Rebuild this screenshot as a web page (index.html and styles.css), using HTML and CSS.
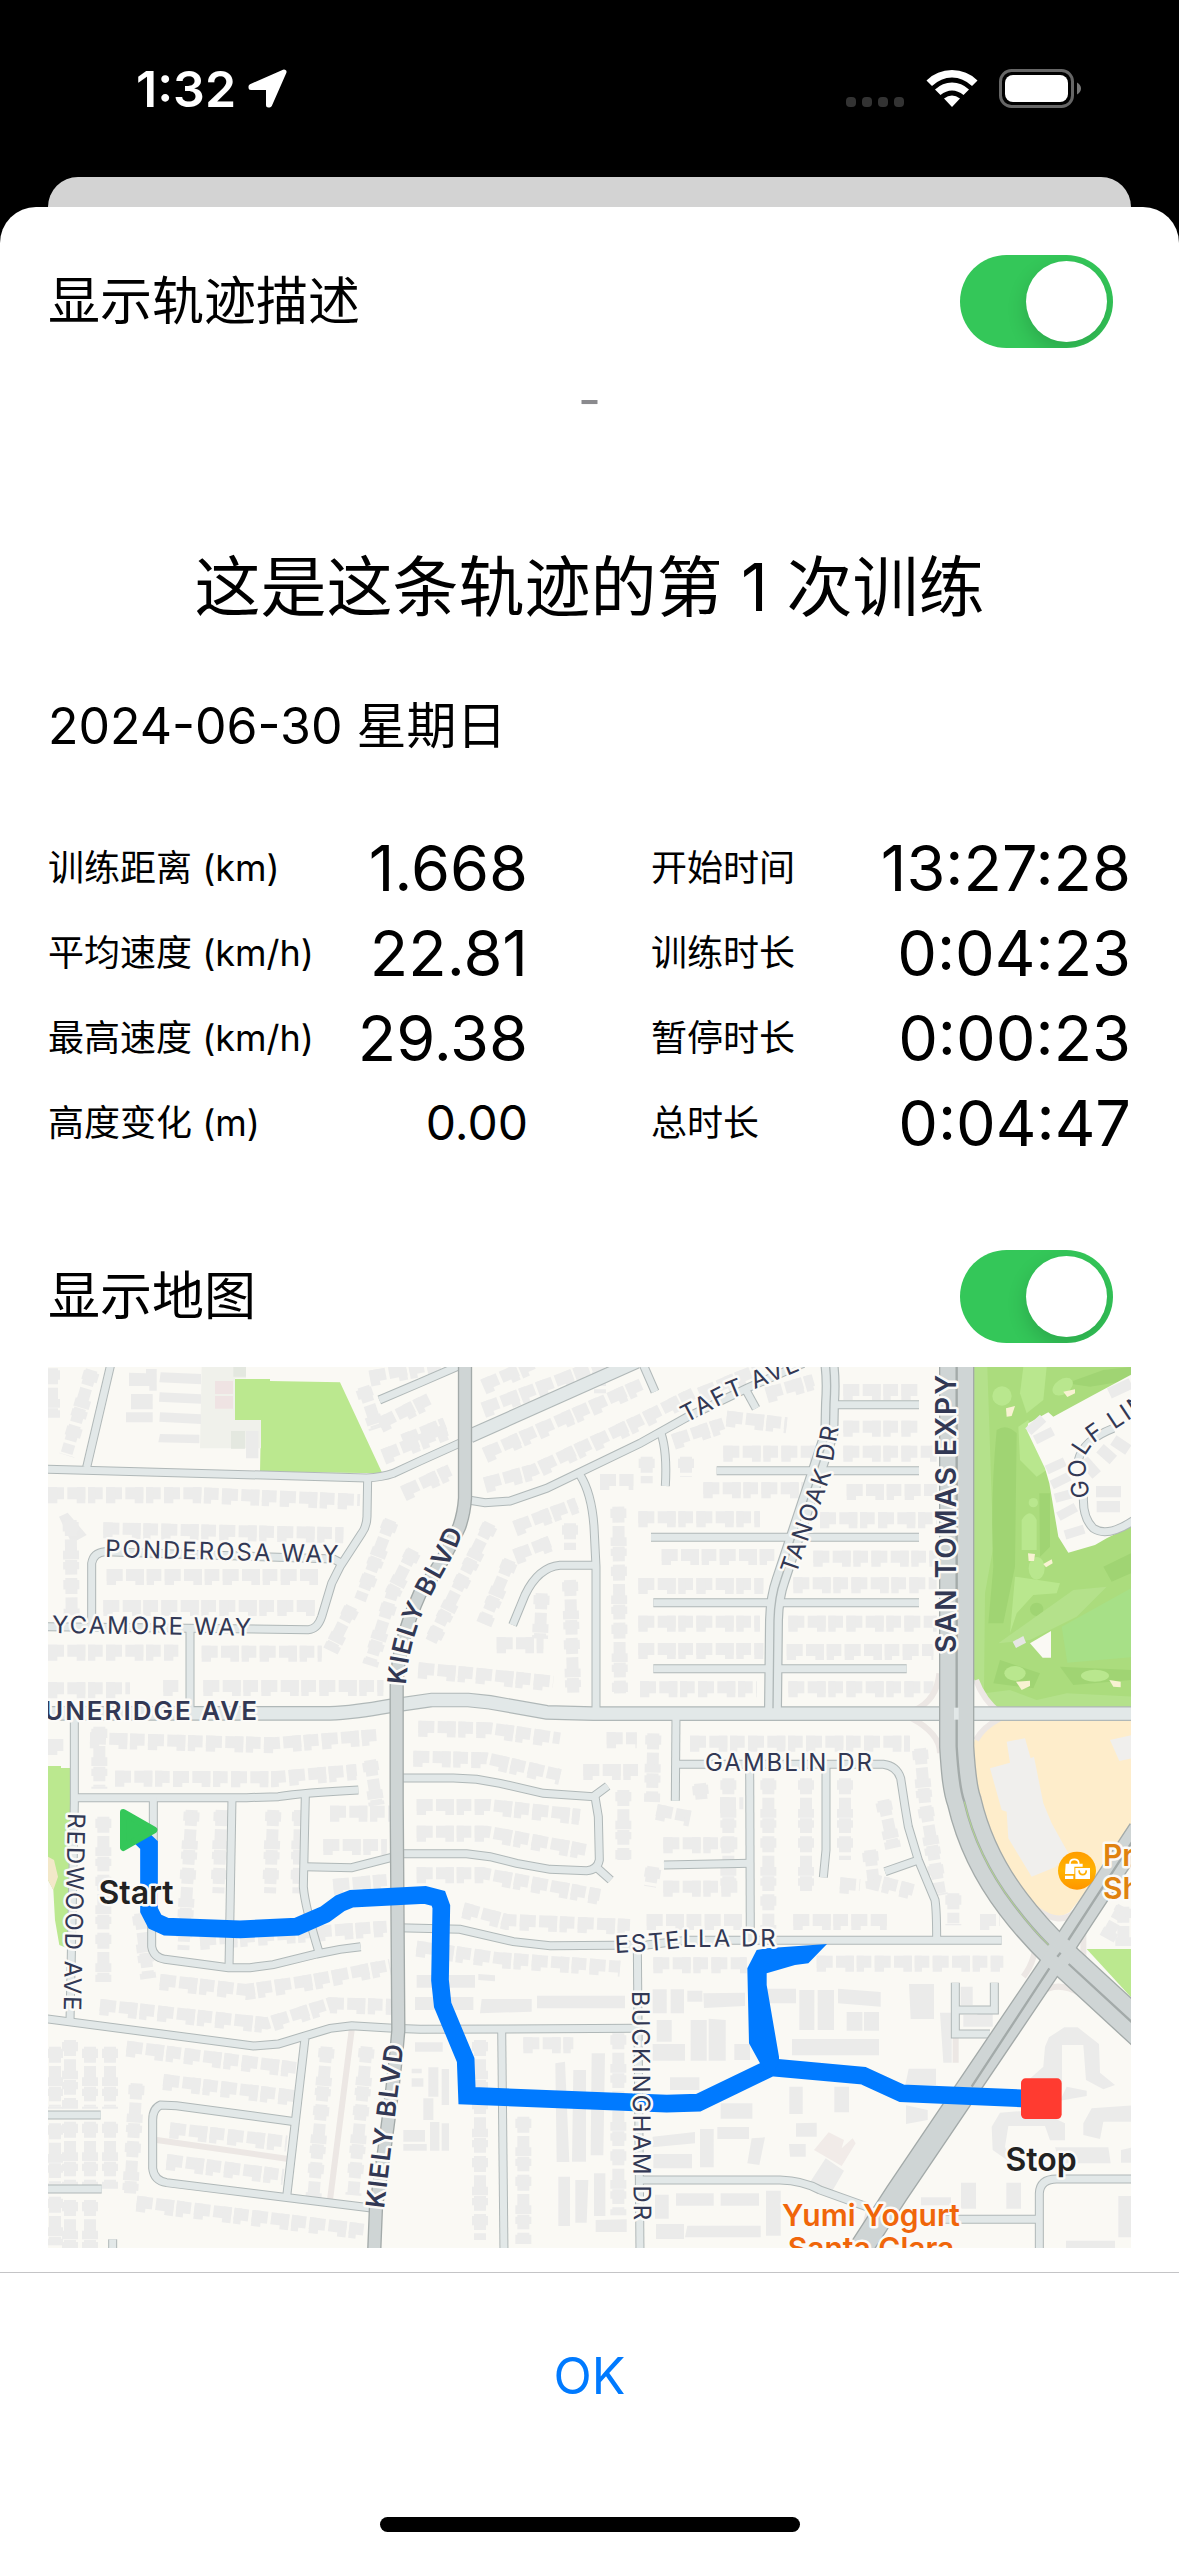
FILE: index.html
```html
<!DOCTYPE html>
<html lang="zh-CN">
<head>
<meta charset="utf-8">
<meta name="viewport" content="width=device-width, initial-scale=1">
<title>训练轨迹</title>
<link rel="stylesheet" href="styles.css">
</head>
<body>
<header class="status">
  <span class="clock">1:32</span>
  <svg class="arrow" viewBox="0 0 40 40" width="40" height="40" aria-hidden="true"><path d="M36 3 L3 17.5 V18.500 H20.500 V36 H21.500 Z" fill="#fff" stroke="#fff" stroke-width="5" stroke-linejoin="round"/></svg>
  <svg class="signal" viewBox="0 0 58 40" width="58" height="40" aria-hidden="true"><g fill="#333"><rect y="28" width="10" height="10" rx="4"/><rect x="16" y="28" width="10" height="10" rx="4"/><rect x="32" y="28" width="10" height="10" rx="4"/><rect x="48" y="28" width="10" height="10" rx="4"/></g></svg>
  <svg class="wifi" viewBox="0 0 52 40" width="52" height="40" aria-hidden="true"><g fill="#fff"><path d="M26 1 Q41 1 51.500 11.500 L46 17 Q37 8.500 26 8.500 T6 17 L.5 11.500 Q11 1 26 1Z"/><path d="M26 13.500 Q35.500 13.500 43 20.500 L37.500 26 Q32 21.500 26 21.500 T14.500 26 L9 20.500 Q16.500 13.500 26 13.500Z"/><path d="M26 26.500 Q30 26.500 34 29.500 L26 38 L18 29.500 Q22 26.500 26 26.500Z"/></g></svg>
  <svg class="battery" viewBox="0 0 83 40" width="83" height="40" aria-hidden="true"><rect x="1.500" y="1.500" width="72" height="36" rx="11" fill="none" stroke="#666" stroke-width="3"/><rect x="6" y="6" width="63" height="27" rx="8" fill="#fff"/><path d="M78 13.500 Q82 16 82 19.500 T78 25.500Z" fill="#777"/></svg>
</header>
<div class="behind"></div>
<main class="sheet">
  <div class="content">
    <div class="option">
      <label for="show-desc">显示轨迹描述</label>
      <input class="switch" type="checkbox" role="switch" id="show-desc" checked>
    </div>
    <p class="desc">-</p>
    <h1 class="title">这是这条轨迹的第 1 次训练</h1>
    <p class="date">2024-06-30 星期日</p>
    <div class="stats">
      <dl class="col">
        <div class="stat"><dt>训练距离 (km)</dt><dd>1.668</dd></div>
        <div class="stat"><dt>平均速度 (km/h)</dt><dd>22.81</dd></div>
        <div class="stat"><dt>最高速度 (km/h)</dt><dd>29.38</dd></div>
        <div class="stat"><dt>高度变化 (m)</dt><dd class="small">0.00</dd></div>
      </dl>
      <dl class="col">
        <div class="stat"><dt>开始时间</dt><dd>13:27:28</dd></div>
        <div class="stat"><dt>训练时长</dt><dd>0:04:23</dd></div>
        <div class="stat"><dt>暂停时长</dt><dd>0:00:23</dd></div>
        <div class="stat"><dt>总时长</dt><dd>0:04:47</dd></div>
      </dl>
    </div>
    <div class="option map-option">
      <label for="show-map">显示地图</label>
      <input class="switch" type="checkbox" role="switch" id="show-map" checked>
    </div>
    <svg class="map" viewBox="0 0 1083 881" role="img" aria-label="训练轨迹地图">
      <defs>
        <linearGradient id="poi" x1="0" y1="0" x2="0" y2="1"><stop offset="0" stop-color="#ff9d00"/><stop offset=".5" stop-color="#ffb300"/><stop offset="1" stop-color="#ff9500"/></linearGradient>
        <g id="lots">
          <path d="M24 400 L480 400 L960 420"/><path d="M190 505 L910 520"/><path d="M200 645 H840"/><path d="M190 738 H825"/><path d="M24 872 H415"/><path d="M485 875 H845"/><path d="M24 985 H270"/><path d="M370 978 H415"/><path d="M490 978 H1030"/><path d="M150 1135 L700 1150 L1010 1125"/><path d="M225 1250 L700 1252 L950 1230"/><path d="M92 480 L95 760"/><path d="M178 1100 V1280"/>
          <path d="M1052 480 L960 720"/><path d="M1120 570 L1060 690 L990 910"/><path d="M935 740 L870 870"/><path d="M155 30 L80 280"/><path d="M36 25 V170"/><path d="M990 50 L1200 10"/><path d="M970 80 L1010 200"/><path d="M1020 190 L1170 115"/><path d="M1030 285 L1220 210"/><path d="M1090 395 L1230 330"/><path d="M1090 240 L1215 190"/><path d="M24 1155 H70"/><path d="M990 1200 L1010 1330"/>
          <path d="M1330 75 L1480 10"/><path d="M1330 145 L1690 10"/><path d="M1335 280 L1810 70"/><path d="M1335 370 L1480 330 L1790 185 L1960 100"/><path d="M1425 500 L1610 430"/><path d="M1425 585 L1530 545"/><path d="M1590 490 V570"/><path d="M1350 490 L1170 850"/><path d="M1410 600 L1330 790"/><path d="M1505 700 L1500 830"/><path d="M1590 660 L1600 1000"/><path d="M1370 850 L1510 850"/><path d="M1135 925 L1300 940 L1540 965"/><path d="M1135 1100 L1350 1105 L1560 1135"/><path d="M1700 1135 H1790"/><path d="M1120 1190 L1340 1195 L1560 1245"/><path d="M1630 1230 H1800"/><path d="M1680 360 H1780"/><path d="M1735 440 L1740 1000"/><path d="M1820 290 V370"/><path d="M1938 290 V350"/><path d="M1840 1120 L1836 1320"/><path d="M1680 30 V100"/><path d="M1750 1290 V1500"/>
          <path d="M1900 240 L2050 190"/><path d="M1980 100 L2150 30"/><path d="M2060 170 L2240 190"/><path d="M2180 100 L2320 60"/><path d="M2050 275 H2330"/><path d="M1990 385 H2290"/><path d="M2410 90 H2640"/><path d="M2410 200 H2640"/><path d="M2410 275 H2690"/><path d="M2420 390 H2690"/><path d="M1795 472 H2160"/><path d="M2340 475 H2690"/><path d="M1865 585 H2210"/><path d="M2320 590 H2690"/><path d="M1795 672 H2170"/><path d="M2260 670 H2690"/><path d="M1795 785 H2160"/><path d="M2245 785 H2690"/><path d="M1795 867 H2170"/><path d="M2240 870 H2680"/><path d="M1800 982 H2150"/><path d="M2245 982 H2680"/><path d="M1950 1145 H2610"/><path d="M1980 1270 L1985 1320"/><path d="M2065 1255 V1580"/><path d="M2185 1255 V1700"/><path d="M2298 1255 V1600"/><path d="M2415 1255 V1500"/><path d="M2640 1165 L2655 1330 L2700 1600"/><path d="M2530 1320 L2560 1460"/>
          <path d="M190 1370 V1860"/><path d="M455 1350 L430 1770"/><path d="M545 1350 L535 1600"/><path d="M700 1350 L690 1600"/><path d="M780 1350 L775 1600"/><path d="M870 1355 H1050"/><path d="M850 1455 H1040"/><path d="M880 1575 L1040 1560"/><path d="M300 1660 L325 1850"/><path d="M480 1740 L1040 1700"/><path d="M360 1860 L620 1890 L820 1860 L1050 1815"/><path d="M180 1935 L680 1990 L870 1930 L1070 1935"/><path d="M260 2060 L780 2125"/><path d="M370 2160 L780 2210"/><path d="M390 2305 L740 2345"/><path d="M380 2400 L730 2445"/><path d="M290 2525 L980 2610"/><path d="M290 2170 L270 2500"/><path d="M860 2060 L820 2510"/><path d="M980 2060 L940 2500"/><path d="M90 2040 V2240"/><path d="M150 2060 V2240"/><path d="M210 2060 V2240"/><path d="M90 2285 V2480"/><path d="M150 2285 V2480"/><path d="M210 2285 V2480"/><path d="M45 2060 V2240"/><path d="M45 2290 V2470"/><path d="M90 2520 V2660"/><path d="M150 2520 V2660"/><path d="M45 2510 V2650"/>
          <path d="M1130 1335 H1350 L1620 1365"/><path d="M1130 1415 H1340 L1640 1470"/><path d="M1130 1540 H1330 L1680 1605"/><path d="M1270 1645 L1400 1680 L1770 1695"/><path d="M1130 1760 L1380 1795 L1740 1820"/><path d="M1840 1810 H2120"/><path d="M2330 1805 H2890"/><path d="M2260 1680 H2540"/><path d="M2740 1600 V1690"/><path d="M2820 1680 H2880"/><path d="M1850 1350 L1950 1370"/><path d="M1870 1450 H2100"/><path d="M1840 1520 L1830 1580"/><path d="M1870 1580 H2100"/><path d="M1820 1680 H2110"/><path d="M2490 1470 L2500 1560 L2620 1590"/><path d="M2400 1570 L2460 1575"/><path d="M1320 2040 V2640"/><path d="M1450 2270 V2650"/><path d="M1450 2050 H1600"/><path d="M1735 2020 V2560"/><path d="M2040 1330 H2110"/><path d="M3250 1640 V1760"/><path d="M3200 1730 L3250 1640"/>
        </g>
        <g id="medium">
          <path d="M10 1060 H870 Q940 1058 1050 1038 L1175 1020 H1285 L1350 1027 L1520 1057 L1660 1061 H3290"/>
          <path d="M1290 228 L1790 5"/>
        </g>
        <g id="local">
          <path d="M213 10 L140 322"/><path d="M10 327 L980 354 Q1025 352 1060 340 L1140 303 L1260 249"/><path d="M1018 120 L1140 68 L1260 16"/>
          <path d="M983 354 L981 470 Q980 500 965 520 L900 620 L875 670 L845 770 Q832 808 805 809 L10 800"/><path d="M155 798 V610 Q160 578 195 575 L880 597 L905 610"/><path d="M450 810 V1050"/>
          <path d="M103 1075 V1330 L90 1985"/><path d="M103 1313 H620 L715 1310 Q790 1298 955 1290"/><path d="M340 1313 V1500 L335 1700 V1760 Q340 1792 375 1798 L565 1823 H630 L700 1814 L830 1782 L900 1768 L962 1760"/><path d="M576 1313 L567 1823"/><path d="M796 1305 L790 1580 Q795 1640 838 1780"/>
          <path d="M795 1520 L935 1523 L1055 1492 L1090 1481 H1280 L1350 1490 L1430 1510 L1530 1528 L1640 1532 Q1672 1530 1678 1500 L1675 1370 L1665 1310"/><path d="M1080 1254 H1240 L1310 1258 L1380 1270 L1510 1300 L1660 1310 L1703 1278"/><path d="M1673 1525 L1712 1560"/>
          <path d="M1075 1703 L1260 1708 L1420 1745 L1530 1757 L1820 1755 L1940 1741 H2885"/><path d="M10 1975 L640 2058 L715 2052 L870 2005 L935 1997 L1060 2005 L1140 2008 L1785 2005"/>
          <path d="M795 2035 L740 2510"/><path d="M765 2285 L410 2237 L362 2235 Q338 2245 338 2280 V2425 Q342 2462 380 2468 L1000 2545"/><path d="M10 2265 H182"/><path d="M10 2487 H185"/><path d="M218 2638 V2680"/>
          <path d="M1385 2005 L1392 2680"/><path d="M1792 1760 L1800 2680"/><path d="M1800 2460 H2220 Q2290 2462 2340 2490 L2480 2540"/><path d="M2700 2578 H2990"/><path d="M2998 2680 V2500 Q3000 2457 3050 2457 H3290"/>
          <path d="M2746 1868 V2022 H2850"/><path d="M2746 1950 H2863 V1868"/><path d="M1915 1213 H2530 Q2570 1218 2582 1255 L2595 1340 L2605 1400 L2635 1500 L2685 1620 Q2690 1650 2690 1741"/><path d="M2635 1500 L2535 1535"/>
          <path d="M2358 1215 V1470 L2350 1552"/><path d="M1908 1065 L1906 1322"/><path d="M2129 1215 L2131 1741"/><path d="M1872 1515 L2131 1510"/><path d="M1668 1060 V620 L1662 500 Q1655 400 1620 345"/><path d="M1418 795 L1455 705 Q1495 622 1560 616 H1668"/>
          <path d="M1285 420 L1335 428 L1410 423 L1520 385 L1800 250 L1940 172 L2120 85 L2290 10"/><path d="M1863 220 Q1882 275 1876 378"/><path d="M1808 10 L1845 95"/><path d="M2115 85 L2148 145"/>
          <path d="M2030 332 H2637"/><path d="M1833 532 H2637"/><path d="M1840 728 H2637"/><path d="M1840 926 H2600"/><path d="M2380 134 H2637"/>
          <path d="M3131 400 Q3125 470 3160 505 Q3205 535 3290 475 M3115 300 Q3130 240 3220 205"/>
        </g>
        <g id="tanoak"><path d="M2367 5 Q2375 60 2370 130 L2368 220 L2222 660 Q2204 710 2202 780 L2199 1045"/></g>
        <path id="kiely" d="M1275 5 V415 Q1272 460 1258 500 Q1210 610 1140 700 Q1072 850 1070 980 V1320 L1075 2010 Q1060 2200 1008 2540 L1002 2690"/>
        <path id="tomas" d="M2750 5 V1160 C2755 1240 2760 1290 2773 1325 C2800 1440 2850 1540 2920 1632 C2960 1685 3000 1730 3055 1783 L3310 2018"/>
        <path id="expy" d="M3300 1410 L3055 1783 L2570 2500 L2460 2670"/>
        <path id="t-ponderosa" d="M57 190 L300 196"/>
        <path id="t-sycamore" d="M4 266 L230 269"/>
        <path id="t-kiely1" d="M358 318 Q360 282 374 248 Q386 222 400 198 Q415 170 425 135"/>
        <path id="t-kiely2" d="M336 842 L360 640"/>
        <path id="t-redwood" d="M20 446 L15 670"/>
        <path id="t-taft" d="M638 56 L690 29 L780 -8"/>
        <path id="t-tanoak" d="M748 208 L782 110 L796 30"/>
        <path id="t-tomas" d="M908 286 V-40"/>
        <path id="t-golf" d="M1042 130 Q1036 100 1038 88 Q1045 74 1060 67 L1110 34"/>
        <path id="t-estella" d="M567 586 Q610 584 640 580 L760 579"/>
        <path id="t-buckingham" d="M584 624 L586 880"/>
      </defs>
      <rect width="1083" height="881" fill="#faf9f4"/>
      <g transform="scale(.333333) translate(-24 -21)">
        <g fill="#bbe88f">
          <path d="M585 57 H690 V63 L900 67 L1027 340 L660 335 L663 185 L579 183 V125 L585 123Z"/>
          <path d="M24 1218 H63 V1224 H92 V1560 L82 1765 L58 1755 L45 1680 L40 1590 L24 1560Z"/>
          <path d="M3140 1767 H3290 V1930Z"/>
        </g>
        <path d="M485 21 H618 V55 H585 V180 H663 V265 H480Z" fill="#f0f1eb"/>
        <path d="M525 63 H579 V102 H525Z M525 108 H579 V146 H525Z" fill="#efe3e3"/>
        <path d="M573 213 H615 V266 H573Z M580 21 H618 V50 H580Z" fill="#e4e8e0"/>
        <path d="M24 1490 L42 1500 L54 1550 L40 1590 L24 1560Z" fill="#f3e8c9"/>
        <path d="M2865 1080 H3290 V1400 L3090 1655 Q3050 1685 2995 1645 Q2830 1480 2805 1300 L2801 1150 Q2810 1110 2865 1080Z" fill="#feedcb"/>
        <path d="M2900 1145 L2955 1135 L2972 1195 L2982 1190 L3010 1330 L3035 1390 L3085 1480 L3045 1522 L2975 1550 L2905 1435 L2900 1355 L2885 1350 L2850 1225 L2910 1208Z M3210 1140 L3290 1122 V1192 L3238 1203Z" fill="#f0efed"/>
        <path d="M2795 21 H3290 V1050 H2862 Q2805 990 2795 930Z" fill="#b4e18b"/>
        <path d="M2842 21 H3290 V1010 L3080 1000 L2990 1020 L2910 990 L2832 1000 L2835 700 L2860 560 Z" fill="#abdc7d"/>
        <g fill="#a0d473">
          <path d="M2870 210 Q2900 190 2930 220 L2925 620 L2890 790 H2845 L2860 620 Q2850 420 2870 210Z"/><path d="M3080 70 L3190 30 L3273 21 V60 L3150 80Z"/><path d="M3190 620 L3273 580 V640 L3215 665Z"/><path d="M2998 400 H3030 V560 L3000 590Z"/><circle cx="2990" cy="748" r="20"/><path d="M2880 900 L3000 940 L2980 985 L2860 970Z"/><path d="M3060 920 L3273 930 V960 L3100 975Z"/>
        </g>
        <g fill="#b9e78e">
          <path d="M2950 21 L3020 21 L3010 120 L2960 160 L2940 100Z"/><circle cx="2886" cy="108" r="29"/><ellipse cx="3068" cy="80" rx="34" ry="22" transform="rotate(-35 3068 80)"/><path d="M2935 200 L2965 180 L3020 330 L2990 350 L2940 300Z"/><path d="M2945 480 Q2970 440 2990 480 V570 H2945Z"/><path d="M2925 650 L3060 670 L3050 700 L2980 705 L2930 760 L2910 820Z"/><ellipse cx="2990" cy="625" rx="24" ry="34"/><ellipse cx="2925" cy="940" rx="32" ry="22"/><ellipse cx="3165" cy="947" rx="42" ry="18"/><circle cx="2980" cy="428" r="14"/>
        </g>
        <path d="M3290 675 L3065 800 L3082 908 L3290 890Z" fill="#a7e087"/>
        <path d="M2875 850 L3100 690 L3200 680 L3110 770 L2970 840Z" fill="#b4e18b"/>
        <path d="M3290 35 L3160 105 L3095 140 L3040 170 L3025 157 L2965 190 L2960 210 L3015 325 L3028 370 L3055 530 L3085 578 L3165 555 L3200 535 L3290 490Z" fill="#faf9f4"/>
        <path d="M2970 850 L3033 813 V893 H3008Z" fill="#faf9f4"/>
        <path d="M2918 845 L2950 828 L2958 848 L2928 864Z" fill="#e6e6e4"/>
        <g fill="#f8f2d2"><path d="M3070 95 L3105 88 V100 L3082 111Z"/><path d="M2898 145 L2925 138 L2915 168 L2900 170Z"/><path d="M2964 580 L2985 582 L2982 603 H2966Z"/><path d="M3010 612 L3035 598 L3038 610 L3018 622Z"/><path d="M2928 965 L2970 962 V978 L2945 990Z"/><path d="M3208 960 L3242 965 V982 L3220 980Z"/></g>
        <g fill="none" stroke="#ebebea" stroke-width="46">
          <path d="M2965 215 L3020 165 M2985 240 L3045 210 M3020 330 L3085 300 M3035 375 L3095 345 M3045 415 L3100 400 M3055 470 L3110 440 M3075 525 L3140 505" stroke-dasharray="60 14" stroke-width="28"/>
          <path d="M3170 440 H3240 M3168 395 H3243 M3208 100 L3273 70 M3130 300 L3170 345 M3180 265 L3220 300 M3220 240 L3265 270" stroke-width="34"/>
        </g>
        <g fill="#ebebea">
          <path d="M267 38 L318 40 V27 H350 V92 H328 V78 H267Z M362 37 L483 42 V73 L358 67Z M359 97 L483 103 V131 L357 125Z M360 157 L483 163 V192 L358 185Z M360 222 L478 224 V250 L355 247Z M273 102 H338 V148 H273Z M258 157 H338 V187 H258Z M618 213 H655 V295 H618Z M57 470 L83 458 L140 525 L95 550Z"/>
          <path d="M1130 1845 H1305 V1883 H1130Z M1125 1911 H1300 V1950 H1125Z M1325 1917 L1475 1917 V1955 L1320 1960Z M1491 1907 H1755 V1945 H1491Z M1315 1842 L1365 1846 V1864 L1315 1860Z M1125 2047 H1208 V2075 H1125Z"/>
          <path d="M1165 2122 H1195 V2210 H1165Z M1205 2127 H1227 V2235 H1205Z M1115 2126 H1145 V2140 H1115Z M1115 2155 H1150 V2180 H1115Z M1150 2215 H1180 V2280 H1150Z M1090 2310 H1155 V2345 H1090Z M1090 2352 H1160 V2372 H1090Z M1170 2286 H1198 V2372 H1170Z M1205 2290 H1227 V2372 H1205Z"/>
          <path d="M1838 1888 H1880 V1960 H1838Z M1892 1888 H1932 V1960 H1892Z M1942 1892 H1987 V1925 H1942Z M1990 1900 L2115 1898 V1938 L1992 1944Z M1838 2052 H1935 V2102 H1838Z M1952 1980 H2000 V2102 H1952Z M2006 1976 L2057 1980 V2102 H2006Z M2083 2052 H2130 V2100 H2083Z M1850 1980 H1895 V2045 H1850Z M1890 2152 H1978 V2190 H1890Z M2042 2230 H2137 V2276 H2042Z"/>
          <path d="M1546 2110 L1575 2105 L1588 2406 H1550Z M1600 2130 H1638 V2405 H1596Z M1655 2080 H1695 L1690 2386 H1652Z M1555 2450 H1590 V2598 H1555Z M1606 2460 H1645 L1640 2588 H1606Z M1662 2440 H1696 V2568 H1662Z M1667 2580 L1760 2578 V2616 H1667Z"/>
          <path d="M1838 2330 L1965 2316 V2350 L1838 2362Z M1980 2307 H2021 V2422 H1980Z M2032 2301 H2127 V2337 H2032Z M1840 2382 H1956 V2425 H1840Z M2135 2335 L2175 2332 L2158 2415 L2122 2410Z M1908 2500 H2021 V2537 H1908Z M2042 2500 H2157 V2537 H2042Z M1848 2592 H1932 V2637 H1848Z M1942 2597 H2162 V2632 H1935Z M1845 2504 H1886 V2576 H1845Z M2178 2492 H2222 V2627 H2178Z"/>
          <path d="M2180 1886 H2268 V1930 H2180Z M2278 1890 H2323 V2010 H2278Z M2333 1890 H2382 V2010 H2333Z M2394 1886 L2522 1896 V1940 L2394 1930Z M2420 1956 H2467 V2012 H2420Z M2472 1956 H2517 V2012 H2472Z M2256 2037 H2517 V2086 H2256Z M2607 1872 H2682 V1977 H2612Z M2606 2126 H2688 V2175 H2596Z M2598 2236 L2663 2250 V2280 L2598 2292Z M2248 2180 H2288 V2262 H2248Z M2383 2180 H2427 V2257 H2383Z M2268 2290 L2330 2288 V2330 H2268Z M2247 2352 H2297 V2390 H2250Z M2700 1958 H2735 V2108 H2710Z M2812 1945 H2858 V1995 H2812Z M2762 1880 H2798 V1935 H2762Z M2770 1965 H2858 V2000 H2770Z M2357 2395 L2412 2432 L2370 2505 L2308 2470Z M2763 2468 H2808 V2546 H2763Z M2899 2468 H2943 V2546 H2899Z M2643 2512 H2733 V2536 H2643Z M3078 2642 H3225 V2664 H3078Z M3235 2508 H3290 V2632 H3235Z"/>
          <path d="M3027 2032 L3073 2002 H3113 L3177 2052 L3180 2138 L3225 2175 L3190 2188 L3138 2160 L3130 2055 L3066 2055 V2190 L2965 2160 L3010 2120 L3015 2060Z M2880 2258 L2990 2250 L3075 2290 V2341 H3030 L3015 2298 H2905 L2895 2360 L2915 2410 L2858 2370 L2855 2300Z M3155 2245 L3290 2235 V2285 H3190 L3180 2337 L3130 2325 V2290Z M3080 2180 L3140 2192 V2208 L3060 2222Z M3045 2362 L3205 2362 L3212 2410 H3060Z M3243 2370 L3290 2360 V2408 H3243Z"/>
        </g>
        <path d="M2366 2317 L2412 2340 L2405 2365 L2438 2335 L2447 2350 L2405 2418 L2322 2370Z" fill="#f1ebe8"/>
        <use href="#lots" class="lots-a"/>
        <use href="#lots" class="lots-b" y="6"/>
        <g class="alley"><path d="M350 2340 L745 2397 M935 2010 L870 2520 M2747 2020 V2108 M2698 940 Q2690 1020 2625 1050 M2615 1075 Q2700 1120 2700 1180 M2808 960 Q2830 1020 2880 1060 M2808 1140 Q2830 1100 2880 1075 M2960 1620 Q3060 1720 3120 1640 M2990 1720 Q2990 1800 2950 1850 M3130 1680 V1840 M3000 1900 Q3050 1860 3120 1900 M2490 2540 L2460 2660"/></g>
        <use href="#local" class="local-casing"/><use href="#medium" class="medium-casing"/><use href="#tanoak" class="tanoak-casing"/>
        <use href="#local" class="local"/><use href="#medium" class="medium"/><use href="#tanoak" class="tanoak"/><use href="#tanoak" class="tanoak-line"/>
        <use href="#kiely" class="kiely-casing"/><use href="#tomas" class="tomas-casing"/><use href="#expy" class="expy-casing"/>
        <use href="#kiely" class="kiely"/><use href="#tomas" class="tomas"/><use href="#expy" class="expy"/>
        <g fill="none" stroke="#a3aaa9" stroke-width="7">
          <path d="M2750 21 V1160 C2755 1240 2760 1290 2773 1325 C2800 1440 2850 1540 2920 1632 C2960 1685 2990 1720 3026 1755 M3086 1812 L3290 2000 M3290 1425 L3085 1740 M3028 1825 L2795 2180 M3062 1778 L3052 1790"/>
        </g>
        <path d="M2773 1325 C2800 1440 2850 1540 2920 1632 C2960 1685 2990 1720 3026 1755" fill="none" stroke="#b4d990" stroke-width="3"/>
        <path d="M2742 1061 H2756" fill="none" stroke="#e2e8e8" stroke-width="36"/>
        <path class="route" d="M285 1415 L327 1455 V1650 L345 1685 L378 1700 L600 1708 L770 1700 L855 1663 L900 1630 L935 1616 L1155 1605 L1195 1615 L1204 1640 L1200 1860 L1208 1935 L1277 2100 L1281 2207 L1880 2231 L1975 2228 L2195 2122 L2470 2147 L2585 2200 L2945 2215"/>
        <path d="M2361 1752 L2305 1810 L2265 1815 L2180 1840 V1875 L2217 2090 V2105 L2195 2150 L2160 2110 L2127 2050 L2122 1825 L2150 1770 L2180 1765Z" fill="#007aff"/>
        <path d="M250 1357 L342 1410 L250 1463Z" fill="#34c759" stroke="#34c759" stroke-width="20" stroke-linejoin="round"/>
        <rect x="2943" y="2155" width="122" height="122" rx="14" fill="#ff3b30"/>
        <circle cx="3111" cy="1532" r="57" fill="url(#poi)"/>
        <g fill="#fff"><path d="M3077 1511 H3128 V1520 H3103 V1542 H3075Z M3075 1547 H3100 V1557 H3075Z M3106 1524 H3150 V1557 H3106Z"/><path d="M3090 1512 V1508 Q3091 1498 3103 1498 T3116 1508 V1512" fill="none" stroke="#fff" stroke-width="5"/><path d="M3117 1531 Q3118 1544 3128 1544 T3139 1531" fill="none" stroke="#ffae00" stroke-width="5"/></g>
      </g>
      <g class="street">
        <text><textPath href="#t-ponderosa">PONDEROSA WAY</textPath></text>
        <text><textPath href="#t-sycamore">YCAMORE WAY</textPath></text>
        <text><textPath href="#t-redwood">REDWOOD AVE</textPath></text>
        <text><textPath href="#t-taft">TAFT AVE</textPath></text>
        <text><textPath href="#t-tanoak">TANOAK DR</textPath></text>
        <text><textPath href="#t-golf">GOLF LIN</textPath></text>
        <text x="657" y="404">GAMBLIN DR</text>
        <text><textPath href="#t-estella">ESTELLA DR</textPath></text>
        <text><textPath href="#t-buckingham">BUCKINGHAM DR</textPath></text>
      </g>
      <g class="street major">
        <text x="-4" y="353">UNERIDGE AVE</text>
        <text><textPath href="#t-kiely1">KIELY BLVD</textPath></text>
        <text><textPath href="#t-kiely2">KIELY BLVD</textPath></text>
        <text class="highway"><textPath href="#t-tomas">SAN TOMAS EXPY</textPath></text>
      </g>
      <g class="place">
        <text class="pin" x="88" y="537" text-anchor="middle">Start</text>
        <text class="pin" x="993" y="804" text-anchor="middle">Stop</text>
        <text class="food" x="823" y="859" text-anchor="middle">Yumi Yogurt</text>
        <text class="food" x="823" y="892" text-anchor="middle">Santa Clara</text>
        <text class="shop" x="1055" y="499">Pr</text>
        <text class="shop" x="1055" y="532">Sh</text>
      </g>
    </svg>
  </div>
  <footer class="footer">
    <button class="ok" type="button">OK</button>
    <div class="home"></div>
  </footer>
</main>
</body>
</html>
```

FILE: styles.css
```css
* { box-sizing: border-box; }
body {
  margin: 0;
  background: #000;
  color: #000;
  font-family: Inter, "Noto Sans CJK SC", sans-serif;
  font-size: 50px;
  line-height: 60px;
}
p, h1, dl, dd { margin: 0; font-weight: 400; }
.status {
  display: flex;
  align-items: center;
  height: 177px;
  padding: 0 97px 0 136px;
  color: #fff;
}
.clock { font-weight: 600; }
.arrow { margin-left: 12px; }
.signal { margin-left: auto; }
.wifi { margin-left: 22px; }
.battery { margin-left: 21px; }
.behind {
  height: 30px;
  margin: 0 48px;
  border-radius: 30px 30px 0 0;
  background: #d3d3d3;
}
.sheet {
  border-radius: 36px 36px 0 0;
  background: #fff;
}
.content { padding: 48px 48px 24px; }
.option {
  display: flex;
  align-items: center;
  justify-content: space-between;
  padding-right: 18px;
  font-size: 52px;
}
.switch {
  appearance: none;
  display: flex;
  justify-content: flex-end;
  width: 153px;
  height: 93px;
  margin: 0;
  padding: 6px;
  border-radius: 47px;
  background: #34c759;
  overflow: hidden;
}
.switch::before {
  content: "";
  width: 81px;
  height: 81px;
  border-radius: 50%;
  background: #fff;
  box-shadow: 0 8px 20px rgba(0, 0, 0, .16);
}
.desc { margin-top: 22px; color: #8a8a8e; text-align: center; }
.title { margin-top: 117px; font-size: 66px; line-height: 80px; text-align: center; }
.date { margin-top: 69px; }
.stats {
  display: grid;
  grid-template-columns: 1fr 1fr;
  column-gap: 123px;
  margin-top: 69px;
}
.stat {
  display: flex;
  align-items: center;
  justify-content: space-between;
  height: 85px;
  white-space: nowrap;
}
.stat dt { font-size: 36px; }
.stat dd { font-size: 63px; }
.stat .small { font-size: 48px; }
.map-option { margin-top: 85px; }
.map { display: block; width: 100%; margin-top: 24px; overflow: hidden; }
.footer {
  display: flex;
  flex-direction: column;
  align-items: center;
  padding: 73px 0 24px;
  border-top: 1px solid #c4c4c6;
}
.ok {
  padding: 0 20px;
  border: 0;
  background: none;
  color: #007aff;
  font: inherit;
}
.home {
  width: 420px;
  height: 15px;
  margin-top: 111px;
  border-radius: 8px;
  background: #000;
}

/* map layers */
.lots-a, .lots-b { fill: none; stroke: #ececeb; }
.lots-a { stroke-width: 36; stroke-dasharray: 48 10 54 8 44 10; }
.lots-b { stroke-width: 48; stroke-dasharray: 28 58 26 8 22 32; }
.alley { fill: none; stroke: #ece7e4; stroke-width: 18; }
.local-casing, .medium-casing, .tanoak-casing { fill: none; stroke: #b0b8b8; }
.local, .medium, .tanoak { fill: none; stroke: #e2e8e8; }
.local-casing { stroke-width: 27; }
.local { stroke-width: 21; }
.medium-casing { stroke-width: 44; }
.medium { stroke-width: 37; }
.tanoak-casing { stroke-width: 54; }
.tanoak { stroke-width: 47; }
.tanoak-line { fill: none; stroke: #b0b8b8; stroke-width: 4; }
.kiely-casing, .tomas-casing, .expy-casing { fill: none; stroke: #a3aaa9; }
.kiely, .tomas, .expy { fill: none; stroke: #cfd5d5; }
.kiely-casing { stroke-width: 43; }
.kiely { stroke-width: 35; }
.tomas-casing { stroke-width: 106; }
.tomas { stroke-width: 98; }
.expy-casing { stroke-width: 74; }
.expy { stroke-width: 66; }
.route { fill: none; stroke: #007aff; stroke-width: 53; }
.street text, .place text {
  paint-order: stroke;
  stroke: #fbfaf7;
  stroke-width: 5px;
  stroke-linejoin: round;
}
.street { font-size: 24px; letter-spacing: 2px; fill: #323854; }
.major { font-size: 26px; font-weight: 600; }
.highway { font-size: 28px; }
.place { font-size: 30px; font-weight: 600; }
.pin { font-size: 32px; fill: #222; }
.food { fill: #f0660a; }
.shop { fill: #e0820f; }
```
